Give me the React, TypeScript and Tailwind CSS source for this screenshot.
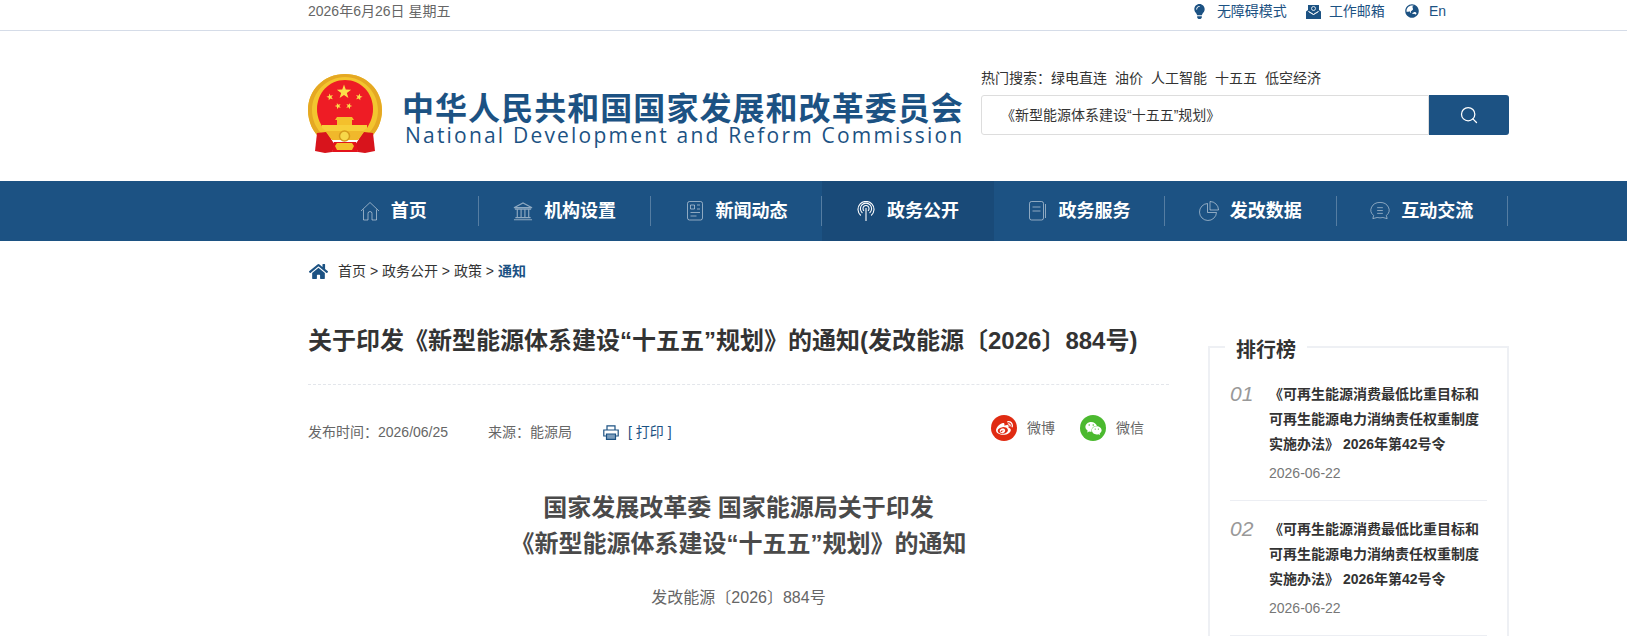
import { Search } from "lucide-react";
import { FaGlobeAsia, FaHome, FaLightbulb, FaWeibo, FaWeixin } from "react-icons/fa";

const star = (cx: number, cy: number, r: number, rot = 0) => {
    const pts: string[] = [];
    for (let i = 0; i < 10; i++) {
        const rad = i % 2 === 0 ? r : r * 0.4;
        const a = ((-90 + rot + i * 36) * Math.PI) / 180;
        pts.push(`${(cx + rad * Math.cos(a)).toFixed(2)},${(cy + rad * Math.sin(a)).toFixed(2)}`);
    }
    return pts.join(" ");
};

function Emblem() {
    return (
        <svg width="74" height="80" viewBox="0 0 74 80" className="shrink-0">
            <path d="M37 0C16 0 0 16 0 36c0 12 5 22 13 29h48c8-7 13-17 13-29C74 16 58 0 37 0z" fill="#f3c52f" />
            <path d="M37 0C16 0 0 16 0 36c0 12 5 22 13 29l3-3C8 55 4 46 4 36 4 18 19 3 37 3s33 15 33 33c0 10-4 19-12 26l3 3c8-7 13-17 13-29C74 16 58 0 37 0z" fill="#e5a823" />
            <path d="M37 6C21 6 9 19 9 35c0 8 3 14 6 19h44c3-5 6-11 6-19C65 19 53 6 37 6z" fill="#ee1c25" />
            <polygon points={star(36, 18, 7.5)} fill="#fbe04a" />
            <polygon points={star(22, 23, 3.6, -15)} fill="#fbe04a" />
            <polygon points={star(51, 23, 3.6, 15)} fill="#fbe04a" />
            <polygon points={star(30, 32, 3.3, -20)} fill="#fbe04a" />
            <polygon points={star(41, 32, 3.3, 20)} fill="#fbe04a" />
            <path d="M29 43h15l2 3h-2v5H29v-5h-2z" fill="#f4c02c" />
            <path d="M14 51h45v3l-5 4H19l-5-4z" fill="#f7cf3a" />
            <path d="M9 59l9-1 5 7 4 6-3 7-7 1-10-2z" fill="#d8141c" />
            <path d="M65 59l-9-1-5 7-4 6 3 7 7 1 10-2z" fill="#d8141c" />
            <path d="M18 57h38l-6 9H24z" fill="#f0b82b" />
            <path d="M26 68h22l2 10H24z" fill="#e3131b" />
            <path d="M29 69h15l2 3-2 4H29l-2-4z" fill="#f4c02c" />
            <circle cx="36.5" cy="62" r="5" fill="#f7d84a" stroke="#d59a1c" strokeWidth="1.5" />
        </svg>
    );
}

function HomeIcon() {
    return (
        <svg width="20" height="20" viewBox="0 0 20 20" fill="none" stroke="currentColor" strokeWidth="1">
            <path d="M1 10L10 1.5 19 10M3.5 8.5V19h4.5v-6.5a2 2 0 0 1 4 0V19h4.5V8.5" />
        </svg>
    );
}

function BankIcon() {
    return (
        <svg width="21" height="20" viewBox="0 0 21 20" fill="none" stroke="currentColor" strokeWidth="1.2">
            <path d="M1 6.5L10.5 1.5 20 6.5zM2 8h17M4.5 8.5v8M8.5 8.5v8M12.5 8.5v8M16.5 8.5v8M2.5 17h16M1 19.2h19" />
        </svg>
    );
}

function NewsIcon() {
    return (
        <svg width="16" height="20" viewBox="0 0 16 20" fill="none" stroke="currentColor" strokeWidth="1">
            <rect x="0.5" y="0.5" width="15" height="18.5" rx="2" />
            <path d="M3.5 4h4v4h-4zM10 4h3M10 8h3M3.5 11.5h9.5M3.5 15h6" />
        </svg>
    );
}

function SignalIcon() {
    return (
        <svg width="18" height="20" viewBox="0 0 18 20" fill="none" stroke="#fff" strokeWidth="1.1">
            <path d="M3.8 14.5a8 8 0 1 1 10.4 0M5.4 12a5.6 5.6 0 1 1 7.2 0M7 9.8a3 3 0 1 1 4 0M9 7v13" />
        </svg>
    );
}

function BookIcon() {
    return (
        <svg width="17" height="20" viewBox="0 0 17 20" fill="none" stroke="currentColor" strokeWidth="1">
            <rect x="0.5" y="0.5" width="14" height="18.5" rx="2" />
            <path d="M3.5 6h8M3.5 10h8M16.5 3v14" />
        </svg>
    );
}

function PieIcon() {
    return (
        <svg width="20" height="20" viewBox="0 0 20 20" fill="none" stroke="currentColor" strokeWidth="1">
            <path d="M8.5 2.5a8.5 8.5 0 1 0 9 9h-9z" />
            <path d="M11 .5a8.5 8.5 0 0 1 8.5 8.5H11z" />
        </svg>
    );
}

function ChatIcon() {
    return (
        <svg width="21" height="20" viewBox="0 0 21 20" fill="none" stroke="currentColor" strokeWidth="1">
            <path d="M10.5 1a9.5 8 0 0 1 6.7 13.7L18 18l-4.5-1.2a9.5 8 0 0 1-6 0L3 18l.8-3.3A9.5 8 0 0 1 10.5 1z" />
            <path d="M7.5 6.5h6M7.5 9.5h6M7.5 12.5h6" />
        </svg>
    );
}

function MailIcon() {
    return (
        <svg width="15" height="15" viewBox="0 0 15 15" className="text-[#1c5283]" fill="currentColor">
            <path d="M2 6V1h11v5l2 1.5V15H0V7.5z" />
            <path d="M2.5 7.5l5 3 5-3-5 3z" stroke="#fff" strokeWidth="0.8" />
            <circle cx="7.5" cy="4.5" r="2" fill="none" stroke="#fff" strokeWidth="0.8" />
        </svg>
    );
}

function PrintIcon() {
    return (
        <svg width="16" height="15" viewBox="0 0 16 15" fill="none" stroke="#1c5283" strokeWidth="1.2">
            <path d="M4 5V.8h8V5M3.5 11H.8V5h14.4v6h-2.7" />
            <path d="M3.5 9h9v5.4h-9z" fill="#7a9cbc" />
        </svg>
    );
}

const navItems = [
    { label: "首页", icon: <HomeIcon /> },
    { label: "机构设置", icon: <BankIcon /> },
    { label: "新闻动态", icon: <NewsIcon /> },
    { label: "政务公开", icon: <SignalIcon />, active: true },
    { label: "政务服务", icon: <BookIcon /> },
    { label: "发改数据", icon: <PieIcon /> },
    { label: "互动交流", icon: <ChatIcon /> },
];

const hotWords = ["绿电直连", "油价", "人工智能", "十五五", "低空经济"];

function RankItem({ no }: { no: string }) {
    return (
        <li className="flex h-[135px] border-b border-[#eceef3] pt-[16px]">
            <span className="w-[39px] shrink-0 text-[21px] leading-[24px] italic text-[#999]">{no}</span>
            <div className="w-[212px]">
                <p className="text-[14px] leading-[25px] font-bold text-[#333]">
                    《可再生能源消费最低比重目标和可再生能源电力消纳责任权重制度实施办法》 2026年第42号令
                </p>
                <p className="mt-[4px] text-[14px] leading-[25px] text-[#777]">2026-06-22</p>
            </div>
        </li>
    );
}

export default function App() {
    return (
        <div className="h-[637px] overflow-hidden bg-white font-['Liberation_Sans','Noto_Sans_CJK_SC',sans-serif] text-[#333]">
            <div className="h-[31px] border-b border-[#d5dce8]">
                <div className="ml-[308px] flex h-[22px] w-[1201px] items-center justify-between text-[14px]">
                    <span className="text-[#666]">2026年6月26日 星期五</span>
                    <div className="flex items-center pr-[63px] text-[#1c5283]">
                        <FaLightbulb className="mr-[10px] size-[15px]" />
                        <span>无障碍模式</span>
                        <span className="ml-[19px] mr-[8px]"><MailIcon /></span>
                        <span>工作邮箱</span>
                        <FaGlobeAsia className="ml-[20px] mr-[10px] size-[14px]" />
                        <span>En</span>
                    </div>
                </div>
            </div>

            <div className="ml-[308px] flex h-[150px] w-[1201px] items-start">
                <div className="mt-[43px] flex">
                    <Emblem />
                    <div className="ml-[20px] mt-[20px] w-[559px] text-[#1c5283]">
                        <div className="text-[32px] leading-[30px] font-bold tracking-[1.05px] whitespace-nowrap">中华人民共和国国家发展和改革委员会</div>
                        <div className="ml-[3px] font-['Open_Sans',sans-serif] text-[21px] leading-[22px] tracking-[2.2px] whitespace-nowrap">
                            National Development and Reform Commission
                        </div>
                    </div>
                </div>
                <div className="ml-[20px] mt-[37px] flex-1">
                    <div className="flex h-[20px] items-center gap-[8px] text-[14px]">
                        <span className="mr-[-8px]">热门搜索：</span>
                        {hotWords.map((w) => (
                            <span key={w}>{w}</span>
                        ))}
                    </div>
                    <div className="mt-[7px] flex h-[40px]">
                        <div className="flex flex-1 items-center rounded-l-[3px] border border-[#ddd] pl-[19px] text-[14px]">
                            《新型能源体系建设“十五五”规划》
                        </div>
                        <div className="flex w-[80px] items-center justify-center rounded-r-[3px] bg-[#1c5283]">
                            <Search className="size-[20px] text-white" strokeWidth={1.5} />
                        </div>
                    </div>
                </div>
            </div>

            <nav className="h-[60px] bg-[#1c5283]">
                <ul className="ml-[308px] flex h-full w-[1200px]">
                    {navItems.map((item) => (
                        <li
                            key={item.label}
                            className={`flex h-full flex-1 items-center ${item.active ? "bg-[#194a78]" : ""}`}
                        >
                            <div className={`flex flex-1 items-center justify-center gap-[11px] ${item.active ? "" : "text-[#ffffff80]"}`}>
                                <span className="flex w-[20px] justify-center">{item.icon}</span>
                                <span className="text-[18px] font-bold text-white">{item.label}</span>
                            </div>
                            <span className={`h-[30px] w-px bg-[#ffffff40] ${item.active ? "invisible" : ""}`} />
                        </li>
                    ))}
                </ul>
            </nav>

            <div className="ml-[308px] w-[1201px]">
                <div className="flex h-[61px] items-center text-[14px]">
                    <FaHome className="ml-px mr-[10px] size-[19px] text-[#1c5283]" />
                    <span>首页 &gt; 政务公开 &gt; 政策 &gt; </span>
                    <span className="ml-1 font-bold text-[#1c5283]">通知</span>
                </div>

                <div className="flex items-start justify-between">
                    <div className="w-[861px]">
                        <h1 className="mt-[20px] border-b border-dashed border-[#e3e6eb] pb-[24px] text-[24px] leading-[38px] font-bold whitespace-nowrap">
                            关于印发《新型能源体系建设“十五五”规划》的通知(发改能源〔2026〕884号)
                        </h1>
                        <div className="mt-[27px] flex h-[40px] items-center text-[14px] text-[#666]">
                            <span className="w-[180px]">发布时间：2026/06/25</span>
                            <span className="w-[115px]">来源：能源局</span>
                            <PrintIcon />
                            <span className="ml-[9px] text-[#1c5283]">[ 打印 ]</span>
                            <div className="ml-auto mr-[25px] mt-[-8px] flex items-center">
                                <span className="flex size-[26px] items-center justify-center rounded-full bg-[#e02b12] text-white">
                                    <FaWeibo className="size-[17px]" />
                                </span>
                                <span className="ml-[10px] mr-[25px]">微博</span>
                                <span className="flex size-[26px] items-center justify-center rounded-full bg-[#4bb92f] text-white">
                                    <FaWeixin className="size-[17px]" />
                                </span>
                                <span className="ml-[10px]">微信</span>
                            </div>
                        </div>
                        <h2 className="mt-[38px] text-center text-[24px] leading-[36px] font-bold text-[#4a4a4a]">
                            国家发展改革委 国家能源局关于印发
                            <br />
                            《新型能源体系建设“十五五”规划》的通知
                        </h2>
                        <p className="mt-[22px] text-center text-[16px] leading-[28px] text-[#666]">发改能源〔2026〕884号</p>
                    </div>

                    <aside className="relative mt-[44px] w-[301px] border-2 border-b-0 border-[#eef0f4] px-[20px] pt-[18px]">
                        <h3 className="absolute -top-[11px] left-[15px] bg-white px-[11px] text-[20px] leading-[26px] font-bold">排行榜</h3>
                        <ul>
                            <RankItem no="01" />
                            <RankItem no="02" />
                        </ul>
                    </aside>
                </div>
            </div>
        </div>
    );
}
